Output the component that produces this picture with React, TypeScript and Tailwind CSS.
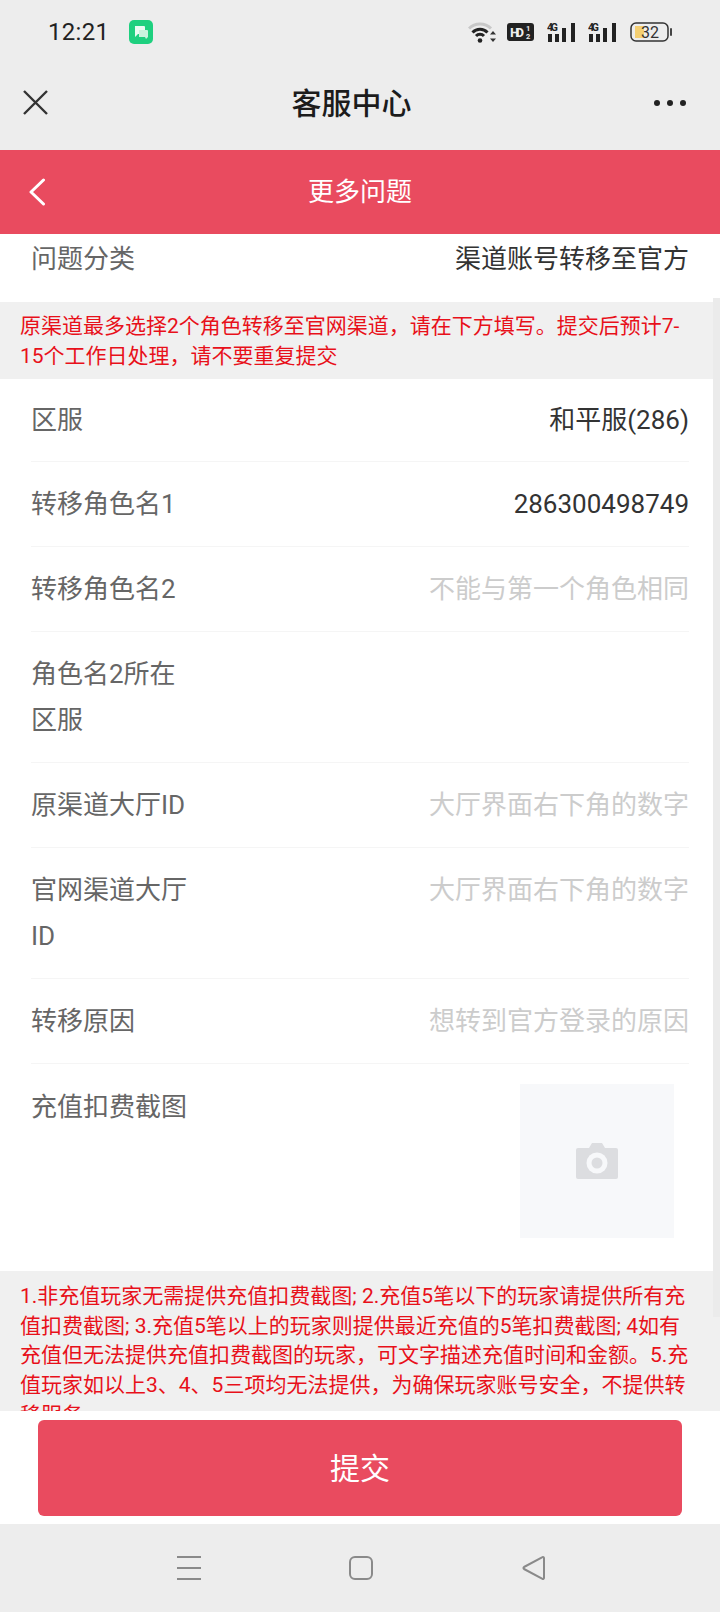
import React from "react";

const font = { fontFamily: '"Roboto","Noto Sans CJK SC",sans-serif' };

function Signal() {
  return (
    <svg width="31" height="21" viewBox="0 0 31 21" className="block">
      <text x="0" y="9" fontSize="10.5" fontWeight="700" fill="#222" fontFamily="Roboto" textLength="11">4G</text>
      <rect x="1" y="12" width="4" height="8" fill="#222" />
      <rect x="8" y="12" width="4" height="8" fill="#222" />
      <rect x="15" y="6" width="4" height="14" fill="#222" />
      <rect x="24" y="1" width="4" height="19" fill="#222" />
    </svg>
  );
}

function Row({ label, value, placeholder, last }: { label: string; value?: string; placeholder?: string; last?: boolean }) {
  return (
    <div className={`flex justify-between py-[19px] text-[26px] leading-[46px] ${last ? "" : "border-b border-[#f5f5f5]"}`}>
      <div className="w-[160px] text-[#666]">{label}</div>
      {value && <div className="text-[#333]">{value}</div>}
      {placeholder && <div className="text-[#ccc]">{placeholder}</div>}
    </div>
  );
}

export default function App() {
  return (
    <div style={font} className="w-[720px] h-[1612px] flex flex-col overflow-hidden bg-white">
      <div className="h-[150px] bg-[#ededed] flex flex-col">
        <div className="h-[64px] flex items-center pl-[48px]">
          <span className="text-[24px] leading-none text-[#222] tracking-[0.3px] w-[81px]">12:21</span>
          <div className="w-[24px] h-[24px] rounded-[5px] bg-[#1ed07f] flex items-center justify-center">
            <svg width="16" height="15" viewBox="0 0 16 15">
              <path d="M2 1h9a1 1 0 0 1 1 1v6a1 1 0 0 1-1 1H5l-3 3z" fill="#e9fbf2" />
              <path d="M6 5h8a1 1 0 0 1 1 1v6l-2 2-1-2H6z" fill="#c9f3de" />
            </svg>
          </div>
          <div className="ml-[315px] flex items-center">
            <svg width="29" height="22" viewBox="0 0 29 22" className="block">
              <path d="M1 7.5A15.5 15.5 0 0 1 23 7.5" fill="none" stroke="#c8c8c8" strokeWidth="3" />
              <path d="M4.5 11.5A10.5 10.5 0 0 1 19.5 11.5" fill="none" stroke="#222" strokeWidth="3" />
              <path d="M8 15A5.5 5.5 0 0 1 16 15" fill="none" stroke="#222" strokeWidth="3" />
              <circle cx="12" cy="19.5" r="2.3" fill="#222" />
              <path d="M25 10l3 3.5h-6zM25 21l-3-3.5h6z" fill="#333" />
            </svg>
            <svg width="27" height="18" viewBox="0 0 27 18" className="block ml-[10px]">
              <rect width="27" height="18" rx="3" fill="#222" />
              <text x="3" y="14" fontSize="13.5" fontWeight="700" fill="#eee" fontFamily="Roboto" textLength="14">HD</text>
              <text x="19" y="8" fontSize="7.5" fontWeight="700" fill="#eee" fontFamily="Roboto">1</text>
              <text x="19" y="16" fontSize="7.5" fontWeight="700" fill="#eee" fontFamily="Roboto">2</text>
            </svg>
            <div className="ml-[13px]"><Signal /></div>
            <div className="ml-[10px]"><Signal /></div>
            <svg width="42" height="20" viewBox="0 0 42 20" className="block ml-[11px]">
              <rect x="5" y="4" width="9" height="12" fill="#f4cf72" />
              <rect x="1" y="1" width="37" height="18" rx="5" fill="none" stroke="#333" strokeWidth="1.5" />
              <rect x="40" y="6" width="2" height="8" rx="1" fill="#444" />
              <text x="11" y="16" fontSize="16" fill="#333" fontFamily="Roboto">32</text>
            </svg>
          </div>
        </div>
        <div className="flex-1 flex items-center justify-between pl-[22px] pr-[34px] pb-[6px]">
          <svg width="27" height="27" viewBox="0 0 27 27" className="block mt-[-4px]">
            <path d="M2 2L25 25M25 2L2 25" stroke="#333" strokeWidth="2.4" />
          </svg>
          <div className="text-[30px] font-medium text-[#1c1c1c] leading-none">客服中心</div>
          <svg width="32" height="6" viewBox="0 0 32 6" className="block mt-[-3px]">
            <circle cx="3" cy="3" r="3" fill="#222" />
            <circle cx="16" cy="3" r="3" fill="#222" />
            <circle cx="29" cy="3" r="3" fill="#222" />
          </svg>
        </div>
      </div>

      <div className="h-[84px] bg-[#e94b5f] flex items-center justify-between pl-[28px] pr-[28px]">
        <svg width="18" height="28" viewBox="0 0 18 28" className="block">
          <path d="M15.5 2L3 14l12.5 12" fill="none" stroke="#fff" strokeWidth="3" strokeLinecap="round" strokeLinejoin="round" />
        </svg>
        <div className="text-[26px] text-white leading-none">更多问题</div>
        <div className="w-[18px]" />
      </div>

      <div className="relative flex-1 overflow-hidden">
        <div className="h-[68px] pt-[2px] px-[31px] flex justify-between text-[26px] leading-[46px]">
          <div className="text-[#666]">问题分类</div>
          <div className="text-[#333]">渠道账号转移至官方</div>
        </div>
        <div className="bg-[#f0f0f0] h-[77px] px-[20px] pt-[9px] text-[21px] leading-[30px] text-[#e8101a]">
          原渠道最多选择2个角色转移至官网渠道，请在下方填写。提交后预计7-15个工作日处理，请不要重复提交
        </div>
        <div className="px-[31px]">
          <div className="flex justify-between py-[18px] text-[26px] leading-[46px] border-b border-[#f5f5f5]">
            <div className="text-[#666]">区服</div>
            <div className="text-[#333]">和平服(286)</div>
          </div>
          <Row label="转移角色名1" value="286300498749" />
          <Row label="转移角色名2" placeholder="不能与第一个角色相同" />
          <Row label="角色名2所在区服" />
          <Row label="原渠道大厅ID" placeholder="大厅界面右下角的数字" />
          <Row label="官网渠道大厅ID" placeholder="大厅界面右下角的数字" />
          <Row label="转移原因" placeholder="想转到官方登录的原因" />
          <div className="h-[207px] pt-[20px] pr-[15px] flex justify-between text-[26px] leading-[46px]">
            <div className="text-[#666]">充值扣费截图</div>
            <div className="w-[154px] h-[154px] bg-[#f7f8fa] flex items-center justify-center">
              <svg width="42" height="36" viewBox="0 0 42 36" className="block">
                <path d="M13 5l3-5h10l3 5h11a2 2 0 0 1 2 2v27a2 2 0 0 1-2 2H2a2 2 0 0 1-2-2V7a2 2 0 0 1 2-2z" fill="#dcdde0" />
                <circle cx="21" cy="20" r="10.5" fill="#f7f8fa" />
                <circle cx="21" cy="20" r="5.5" fill="#dcdde0" />
              </svg>
            </div>
          </div>
        </div>
        <div className="bg-[#f0f0f0] px-[20px] pt-[11px] text-[21px] leading-[29.7px] text-[#e8101a]">
          1.非充值玩家无需提供充值扣费截图; 2.充值5笔以下的玩家请提供所有充值扣费截图; 3.充值5笔以上的玩家则提供最近充值的5笔扣费截图; 4如有充值但无法提供充值扣费截图的玩家，可文字描述充值时间和金额。5.充值玩家如以上3、4、5三项均无法提供，为确保玩家账号安全，不提供转移服务。
        </div>
        <div className="absolute right-0 top-[64px] w-[7px] h-[1019px] bg-[#ebebeb]" />
      </div>

      <div className="h-[113px] bg-white px-[38px] pt-[9px]">
        <div className="h-[96px] rounded-[6px] bg-[#e94b5f] flex items-center justify-center text-[30px] text-white">提交</div>
      </div>

      <div className="h-[88px] bg-[#ededed] flex items-center pl-[177px] pb-[1px]">
        <svg width="24" height="24" viewBox="0 0 24 24" className="block">
          <path d="M0 1h24M0 12h24M0 23h24" stroke="#8a8a8a" strokeWidth="2" />
        </svg>
        <svg width="24" height="24" viewBox="0 0 24 24" className="block ml-[148px]">
          <rect x="1" y="1" width="22" height="22" rx="5" fill="none" stroke="#8a8a8a" strokeWidth="2" />
        </svg>
        <svg width="24" height="24" viewBox="0 0 24 24" className="block ml-[149px]">
          <path d="M22 2v20a1 1 0 0 1-1.5.8L2 13a1.2 1.2 0 0 1 0-2L20.500 1.200A1 1 0 0 1 22 2z" fill="none" stroke="#8a8a8a" strokeWidth="2" strokeLinejoin="round" />
        </svg>
      </div>
    </div>
  );
}
